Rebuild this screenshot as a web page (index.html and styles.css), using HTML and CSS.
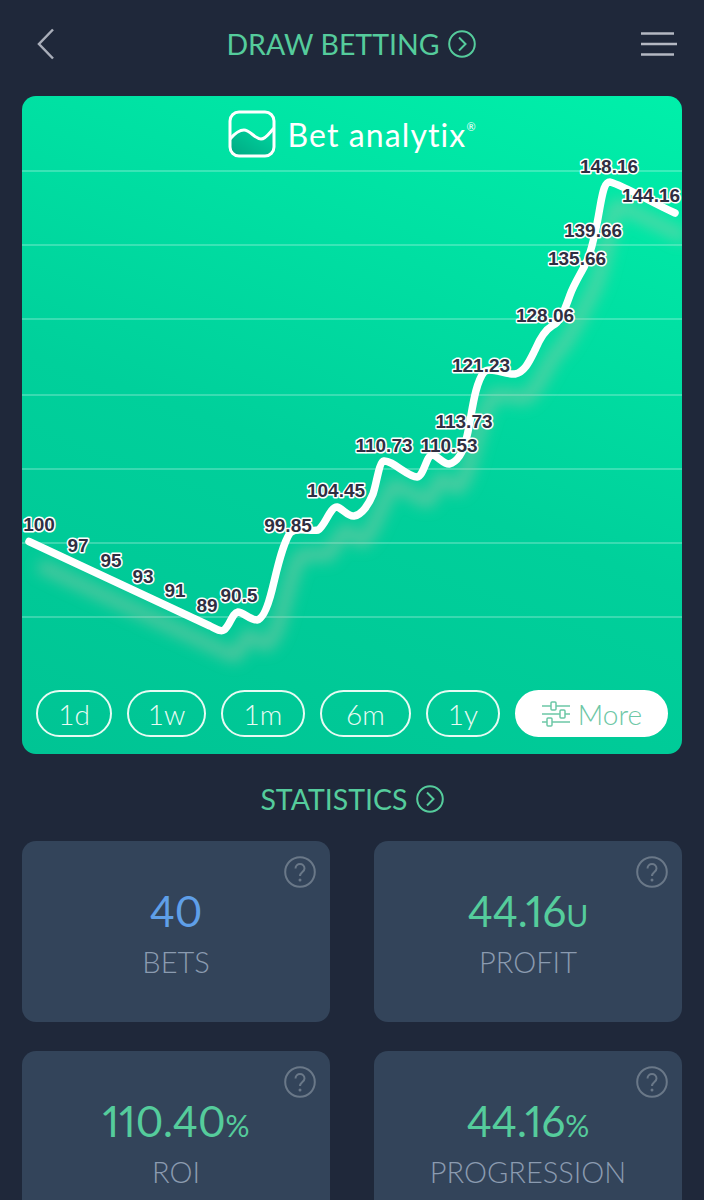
FILE: index.html
```html
<!DOCTYPE html>
<html lang="en">
<head>
    <meta charset="UTF-8">
    <meta name="viewport" content="width=device-width, initial-scale=1.0">
    <title>Draw Betting</title>
    <link rel="stylesheet" href="styles.css">
</head>
<body>
    <header class="topbar">
        <svg class="back" width="20" height="32" viewBox="0 0 20 32"><path d="M17 1.500 L3 16 L17 30.500"/></svg>
        <div class="heading">
            <span>DRAW BETTING</span>
            <svg class="go" width="28" height="28" viewBox="0 0 28 28"><circle cx="14" cy="14" r="12.800"/><path d="M11 7.500 L17.500 14 L11 20.500"/></svg>
        </div>
        <svg class="menu" width="38" height="24" viewBox="0 0 38 24"><path d="M1 1.500 H34 M1 12 H37 M1 22.500 H34"/></svg>
    </header>

    <section class="chart">
        <svg class="plot" width="660" height="658" viewBox="22 96 660 658">
            <defs>
                <filter id="soft" x="-10%" y="-10%" width="120%" height="120%"><feGaussianBlur stdDeviation="7"/></filter>
            </defs>
            <g class="grid">
                <path d="M22 171 H682 M22 245 H682 M22 319 H682 M22 395 H682 M22 469 H682 M22 543 H682 M22 617 H682"/>
            </g>
            <path class="shade" d="M39 565 L232 655 C240 658 242 640 248 636 C254 634 260 646 267 644 C280 640 288 575 300 557 C306 552 322 556 328 555 C334 550 340 531 347 531 C352 533 358 541 363 541 C370 540 388 490 393 486 C400 484 420 500 427 501 C434 500 436 479 442 479 C448 480 452 488 458 488 C470 480 478 420 492 397 C498 392 518 398 525 398 C535 395 545 368 557 352 C566 345 572 330 580 317 L593 291 C600 280 606 250 610 231 C612 215 614 206 618 206 C632 210 660 226 685 237"/>
            <path class="line" d="M29 541.500 L210 626 C218 630 221 632 224 630 C230 626 232 613 238 612 C243 612 250 620 257 620 C263 619 268 606 272 590 C277 570 282 545 290 533 C296 526 310 532 318 530 C325 526 330 507 337 507 C342 508 348 517 354 516 C362 515 369 504 373 494 C377 482 379 462 384 461 C392 460 408 477 417 477 C424 476 426 456 432 455 C437 455 443 464 449 464 C458 462 464 450 467 436 C472 415 474 385 484 372 C490 366 505 375 515 374 C525 372 530 360 535 350 C540 338 545 330 552 326 C560 322 564 312 570 295 C574 284 580 275 585 265 C592 252 597 225 600 207 C603 190 605 182 610 182 C625 186 650 202 675 213"/>
            <g class="labels">
                <text x="39" y="531">100</text>
                <text x="78" y="552">97</text>
                <text x="111" y="567">95</text>
                <text x="143" y="583">93</text>
                <text x="175" y="597">91</text>
                <text x="207" y="612">89</text>
                <text x="239" y="602">90.5</text>
                <text x="288" y="532">99.85</text>
                <text x="336" y="497">104.45</text>
                <text x="384" y="452">110.73</text>
                <text x="449" y="452">110.53</text>
                <text x="464" y="428">113.73</text>
                <text x="481" y="372">121.23</text>
                <text x="545" y="322">128.06</text>
                <text x="577" y="265">135.66</text>
                <text x="593" y="237">139.66</text>
                <text x="609" y="173">148.16</text>
                <text x="651" y="202">144.16</text>
            </g>
        </svg>

        <div class="brand">
            <svg width="48" height="48" viewBox="0 0 48 48">
                <defs>
                    <linearGradient id="brandfade" x1="0" y1="1" x2="1" y2="0"><stop offset="0" stop-color="#00a883"/><stop offset="1" stop-color="#00d8a0"/></linearGradient>
                </defs>
                <path class="brand-fill" d="M2 29 C8 22 12 20 16 20 C22 20 27 29 33 29 C38 29 42 22 46 18 V37 C46 42 42 46 37 46 H11 C6 46 2 42 2 37 Z"/>
                <rect class="brand-box" x="2" y="2" width="44" height="44" rx="9"/>
                <path class="brand-wave" d="M2 29 C8 22 12 20 16 20 C22 20 27 29 33 29 C38 29 42 22 46 18"/>
            </svg>
            <span class="brand-name">Bet analytix<sup>®</sup></span>
        </div>

        <div class="ranges">
            <div class="pill">1d</div>
            <div class="pill">1w</div>
            <div class="pill">1m</div>
            <div class="pill">6m</div>
            <div class="pill">1y</div>
            <div class="pill more">
                <svg width="30" height="26" viewBox="0 0 30 26">
                    <path d="M1 5 H29 M1 13 H29 M1 21 H29"/>
                    <rect x="10" y="1" width="5" height="8" rx="1"/>
                    <rect x="19" y="9" width="5" height="8" rx="1"/>
                    <rect x="6" y="17" width="5" height="8" rx="1"/>
                </svg>
                More
            </div>
        </div>
    </section>

    <div class="heading stats-title">
        <span>STATISTICS</span>
        <svg class="go" width="28" height="28" viewBox="0 0 28 28"><circle cx="14" cy="14" r="12.800"/><path d="M11 7.500 L17.500 14 L11 20.500"/></svg>
    </div>

    <section class="stats">
        <div class="stat">
            <svg class="help" width="32" height="32" viewBox="0 0 32 32"><circle cx="16" cy="16" r="14.800"/><path d="M11.500 12.500 C11.500 6.500 20.500 6.500 20.500 12.500 C20.500 16 16 16 16 20"/><circle class="dot" cx="16" cy="24" r="1.500"/></svg>
            <div class="value blue">40</div>
            <div class="name">BETS</div>
        </div>
        <div class="stat">
            <svg class="help" width="32" height="32" viewBox="0 0 32 32"><circle cx="16" cy="16" r="14.800"/><path d="M11.500 12.500 C11.500 6.500 20.500 6.500 20.500 12.500 C20.500 16 16 16 16 20"/><circle class="dot" cx="16" cy="24" r="1.500"/></svg>
            <div class="value">44.16<small>U</small></div>
            <div class="name">PROFIT</div>
        </div>
        <div class="stat">
            <svg class="help" width="32" height="32" viewBox="0 0 32 32"><circle cx="16" cy="16" r="14.800"/><path d="M11.500 12.500 C11.500 6.500 20.500 6.500 20.500 12.500 C20.500 16 16 16 16 20"/><circle class="dot" cx="16" cy="24" r="1.500"/></svg>
            <div class="value">110.40<small>%</small></div>
            <div class="name">ROI</div>
        </div>
        <div class="stat">
            <svg class="help" width="32" height="32" viewBox="0 0 32 32"><circle cx="16" cy="16" r="14.800"/><path d="M11.500 12.500 C11.500 6.500 20.500 6.500 20.500 12.500 C20.500 16 16 16 16 20"/><circle class="dot" cx="16" cy="24" r="1.500"/></svg>
            <div class="value">44.16<small>%</small></div>
            <div class="name">PROGRESSION</div>
        </div>
    </section>
</body>
</html>
```

FILE: styles.css
```css
html, body {
    margin: 0;
    height: 1200px;
    overflow: hidden;
}
body {
    background-color: #1f283a;
    font-family: "Lato", "Open Sans", sans-serif;
    font-weight: 300;
    padding: 0 22px;
    box-sizing: border-box;
}

/* top bar */
.topbar {
    height: 96px;
    display: flex;
    align-items: center;
    justify-content: space-between;
    padding: 0 4px 8px 14px;
    box-sizing: border-box;
}
.back {
    margin-right: 6px;
}
.back path {
    fill: none;
    stroke: #a9aeb9;
    stroke-width: 2.500;
}
.menu path {
    fill: none;
    stroke: #b4b8c2;
    stroke-width: 2.500;
}
.heading {
    display: flex;
    align-items: center;
    justify-content: center;
    gap: 8px;
    color: #55cc9c;
    font-size: 28.500px;
    font-weight: 400;
}
.go circle, .go path {
    fill: none;
    stroke: #55cc9c;
    stroke-width: 2;
}

/* chart card */
.chart {
    position: relative;
    height: 658px;
    border-radius: 14px;
    overflow: hidden;
    background: linear-gradient(20deg, #00c494 0%, #00d09b 45%, #00f0aa 100%);
    display: flex;
    flex-direction: column;
    justify-content: space-between;
}
.plot {
    position: absolute;
    left: 0;
    top: 0;
}
.grid path {
    fill: none;
    stroke: #ffffff;
    stroke-opacity: 0.3;
    stroke-width: 1.500;
}
.line {
    fill: none;
    stroke: #fff;
    stroke-width: 7.500;
    stroke-linecap: round;
    stroke-linejoin: round;
}
.shade {
    fill: none;
    stroke: #b9c4a8;
    stroke-opacity: 0.4;
    stroke-width: 14;
    filter: url(#soft);
}
.labels text {
    font-family: "Liberation Sans", Arial, sans-serif;
    font-size: 19px;
    font-weight: 700;
    text-anchor: middle;
    fill: #2f2f42;
    stroke: #fff;
    stroke-width: 3px;
    paint-order: stroke;
    stroke-linejoin: round;
}

.brand {
    position: relative;
    display: flex;
    align-items: center;
    justify-content: center;
    gap: 11px;
    padding-top: 14px;
    color: #fff;
}
.brand-box, .brand-wave {
    fill: none;
    stroke: #fff;
    stroke-width: 3;
}
.brand-fill {
    fill: url(#brandfade);
}
.brand-name {
    font-size: 32px;
    font-weight: 400;
    letter-spacing: 1.100px;
}
.brand-name sup {
    font-size: 11px;
    vertical-align: 16px;
    line-height: 0;
    letter-spacing: 0;
}

.ranges {
    position: relative;
    display: grid;
    grid-template-columns: 76px 79px 84px 91px 74px 153px;
    gap: 15px;
    padding: 0 14px 17px;
}
.pill {
    height: 47px;
    box-sizing: border-box;
    border: 2px solid #e6fbf3;
    border-radius: 24px;
    color: #e9fbf4;
    font-size: 28px;
    display: flex;
    align-items: center;
    justify-content: center;
}
.more {
    background-color: #fff;
    border-color: #fff;
    color: #6cc7a6;
    gap: 7px;
}
.more path, .more rect {
    fill: #fff;
    stroke: #6cc7a6;
    stroke-width: 1.500;
}

/* statistics */
.stats-title {
    height: 87px;
    padding-top: 3px;
    box-sizing: border-box;
}
.stats {
    display: grid;
    grid-template-columns: 308px 308px;
    gap: 29px 44px;
}
.stat {
    position: relative;
    height: 181px;
    border-radius: 14px;
    background-color: #33445a;
    text-align: center;
    padding-top: 42px;
    box-sizing: border-box;
}
.help {
    position: absolute;
    right: 14px;
    top: 15px;
}
.help circle, .help path {
    fill: none;
    stroke: #6a7888;
    stroke-width: 2;
}
.help .dot {
    fill: #6a7888;
    stroke: none;
}
.value {
    color: #55cc9c;
    font-size: 42px;
    font-weight: 400;
    font-variant-numeric: proportional-nums;
    line-height: 56px;
}
.value small {
    font-size: 30px;
    line-height: 0;
}
.blue {
    color: #5f9fe8;
}
.name {
    color: #8b9bb0;
    font-size: 29px;
    line-height: 46px;
}
```
